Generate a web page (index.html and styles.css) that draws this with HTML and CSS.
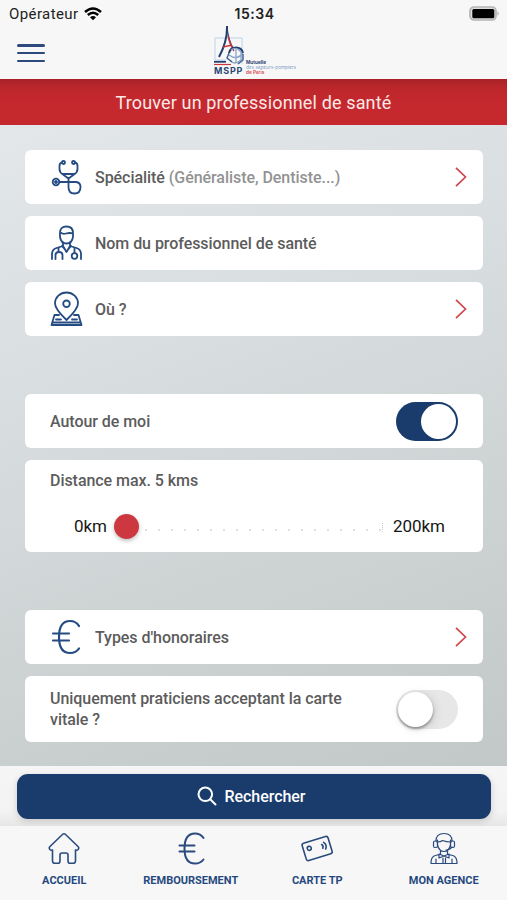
FILE: index.html
```html
<!doctype html>
<html lang="fr">
  <head>
    <meta charset="UTF-8" />
    <meta name="viewport" content="width=device-width, initial-scale=1.0" />
    <title>Trouver un professionnel de santé</title>
    <link rel="stylesheet" href="styles.css" />
  </head>

  <body>
    <div class="status-bar">
      <div class="operator">
        <span>Opérateur</span>
        <svg width="18" height="14" viewBox="0 0 18 14" fill="none" stroke="#000" stroke-width="2.5">
          <path d="M1 5Q9-2 17 5M3.8 8Q9 3.4 14.2 8" />
          <path d="M6 10.3Q9 7.8 12 10.3L9 13.3Z" fill="#000" stroke="none" />
        </svg>
      </div>
      <span class="time">15:34</span>
      <svg class="battery" width="31" height="16" viewBox="0 0 31 16">
        <rect x="1" y="1" width="26" height="13" rx="4" fill="#ddd" stroke="#b5b5b5" stroke-width="1.7" />
        <rect x="3.3" y="3" width="22" height="9.3" rx="1.5" />
        <path d="M28.5 5.2Q31 7.5 28.5 9.8Z" fill="#aaa" />
      </svg>
    </div>

    <header>
      <button class="menu" aria-label="Menu"><span></span><span></span><span></span></button>
      <div class="logo">
        <svg width="31" height="40" viewBox="0 0 31 40" fill="none">
          <path d="M1 12H28V38M1 12V34H12" stroke="#b9d5ee" stroke-width="1" />
          <path d="M13 0Q13.5 15 5 31" stroke="#243f6b" stroke-width="2" />
          <path d="M13 2Q14.5 14 19 22" stroke="#243f6b" stroke-width="1.3" />
          <path d="M14 10Q16 19 20 25M9 21L18 19" stroke="#c9373d" stroke-width="1.4" />
          <path d="M15 27A7.2 7.2 0 0 1 29 27" stroke="#203d6c" stroke-width="2" />
          <path d="M17 24Q22 20 27 26V34Q20 40 16 34M15 29Q23 35 29 27M22 23V37" stroke="#8aa5c8" stroke-width="1.3" />
          <path d="M15 27L13 32L18 36M29 28V34L24 38" stroke="#395d8f" stroke-width="1.4" />
          <path d="M0 35.8H12" stroke="#243f6b" stroke-width="1.8" />
          <path d="M0 38.5H17" stroke="#c9373d" stroke-width="1.2" />
        </svg>
        <div class="logo-text">
          <b>MSPP</b>
          <p><strong>Mutuelle</strong><span>des sapeurs-pompiers</span><em>de Paris</em></p>
        </div>
      </div>
    </header>

    <h1>Trouver un professionnel de santé</h1>

    <main>
      <section>
        <div class="card">
          <svg class="icon" width="36" height="36" viewBox="0 0 36 36">
            <circle cx="13.5" cy="3.500" r="1.500" />
            <circle cx="23.500" cy="3.500" r="1.500" />
            <path d="M12 3.500Q9.500 4 9.500 7V10Q9.500 13.500 13 15.500L18.500 19.500L24 15.500Q27.500 13.500 27.500 10V7Q27.500 4 25 3.500M12.500 15H24.500" />
            <circle cx="6" cy="23" r="3.300" />
            <circle cx="6" cy="23" r="1" />
            <path d="M9.300 23H26Q30.500 23.500 30.500 28Q30.500 34.500 24.500 34.500Q18.500 34.500 18.500 28V20" />
          </svg>
          <p>Spécialité <span>(Généraliste, Dentiste...)</span></p>
          <svg class="chevron" width="12" height="20" viewBox="0 0 12 20"><path d="M1 .8L10.5 10L1 19.2" /></svg>
        </div>
        <div class="card">
          <svg class="icon" width="36" height="36" viewBox="0 0 36 36">
            <path d="M10 8Q10 1.500 16.500 1.500T23 8V12Q22 18.500 16.500 18.500T10 12ZM10 7Q12 9.500 16 8.500Q20 7.500 23 8.500" />
            <path d="M13 17.500V21L6.500 23Q2 24.500 2 29V34M20 17.500V21L26.500 23Q31 24.500 31 29V34M13 21L16.500 27L20 21M12 21L14.500 24M21 21L18.500 24" />
            <path d="M8.500 23V27M5.500 34V30Q5.500 27 9 27T12.500 30V34M24.500 23V28" />
            <circle cx="24.500" cy="31" r="2.800" />
          </svg>
          <p>Nom du professionnel de santé</p>
        </div>
        <div class="card">
          <svg class="icon" width="36" height="36" viewBox="0 0 36 36">
            <path d="M16.5 29Q5 18 5 12.5A11.5 11 0 0 1 28 12.5Q28 18 16.5 29Z" />
            <circle cx="16.5" cy="12.8" r="3.3" />
            <path d="M9 24H4.500L1.500 34H31.500L28.500 24H24M2.500 31.500H30.500M6 28.500H11M22 28.500H27" />
          </svg>
          <p>Où ?</p>
          <svg class="chevron" width="12" height="20" viewBox="0 0 12 20"><path d="M1 .8L10.5 10L1 19.2" /></svg>
        </div>
      </section>

      <section>
        <div class="card">
          <p>Autour de moi</p>
          <span class="toggle on"></span>
        </div>
        <div class="card distance">
          <p>Distance max. 5 kms</p>
          <div class="range">
            <span>0km</span>
            <span class="knob"></span>
            <span class="track"></span>
            <span>200km</span>
          </div>
        </div>
      </section>

      <section>
        <div class="card">
          <svg class="icon euro" width="36" height="36" viewBox="0 0 36 36">
            <path d="M29 7Q26 2 20 2Q9 2 9 18T20 34Q26 34 29 29.500M3 14.500H19M3 21.500H19" />
          </svg>
          <p>Types d'honoraires</p>
          <svg class="chevron" width="12" height="20" viewBox="0 0 12 20"><path d="M1 .8L10.5 10L1 19.2" /></svg>
        </div>
        <div class="card tall">
          <p>Uniquement praticiens acceptant la carte vitale ?</p>
          <span class="toggle"></span>
        </div>
      </section>
    </main>

    <div class="action">
      <button class="search">
        <svg width="20" height="20" viewBox="0 0 20 20" fill="none" stroke="#fff" stroke-width="2">
          <circle cx="8.3" cy="8.3" r="6.8" />
          <path d="M13.2 13.2L18.5 18.5" stroke-linecap="round" />
        </svg>
        Rechercher
      </button>
    </div>

    <nav>
      <a>
        <svg width="32" height="34" viewBox="0 0 32 34">
          <path d="M14.7 2.2Q16 1.2 17.3 2.2L30 14.5Q31.5 16 30 17.7Q28.8 18.5 27.5 18V29Q27.5 31.3 25 31.3H22Q20 31.3 20 29V23Q20 21 18 21H14Q12 21 12 23V29Q12 31.3 10 31.3H7Q4.5 31.3 4.5 29V18Q3.2 18.5 2 17.7Q.5 16 2 14.5Z" />
        </svg>
        Accueil
      </a>
      <a>
        <svg class="euro" width="32" height="34" viewBox="0 0 32 34">
          <path d="M28.5 6Q25.5 1.5 20 1.500Q9.500 1.500 9.500 16.500T20 31.500Q25.500 31.500 28.500 27.500M4.500 13.500H19.500M4.500 19.500H19.500" />
        </svg>
        Remboursement
      </a>
      <a>
        <svg width="32" height="34" viewBox="0 0 32 34">
          <g transform="rotate(-17 16 16)">
            <rect x="2.5" y="7.5" width="27" height="18" rx="2" />
            <circle cx="8.5" cy="14" r="2" />
            <path d="M21.5 14Q23 16 21.5 18M24 12.5Q26.8 16 24 19.5" />
          </g>
        </svg>
        Carte TP
      </a>
      <a>
        <svg class="agent" width="32" height="34" viewBox="0 0 32 34">
          <path d="M8 9Q8 1.5 16 1.5T24 9M9 10Q13 10 14.5 8.500Q18 10 23 10M9.500 8V13Q11 19.500 16 19.500T22.500 13V8" />
          <rect x="5.500" y="9" width="4" height="6.500" rx="1.500" />
          <rect x="22.500" y="9" width="4" height="6.500" rx="1.500" />
          <path d="M24 15Q22 18 18 18M12.500 19V22L6 24Q3 25.500 3 31.500H29Q29 25.500 26 24L19.500 22V19M11 22L16 24L21 22V26L16 24L11 26ZM15 26V31M17.500 26V31M8 27V31M24 27V31" />
        </svg>
        Mon agence
      </a>
    </nav>
  </body>
</html>
```

FILE: styles.css
```css
* {
  box-sizing: border-box;
}

body {
  margin: 0;
  height: 900px;
  display: flex;
  flex-direction: column;
  overflow: hidden;
  background: #f7f7f7;
  color: #5c5c5c;
  font-family: Roboto, sans-serif;
  font-size: 16px;
}

p {
  margin: 0;
}

button {
  padding: 0;
  border: 0;
  background: none;
  font: inherit;
}

.status-bar {
  height: 27px;
  padding: 0 7px 0 9px;
  display: grid;
  grid-template-columns: 1fr auto 1fr;
  align-items: center;
  color: #222;
}

.operator {
  display: flex;
  align-items: center;
  gap: 6px;
  font-size: 15px;
  letter-spacing: 0.4px;
}

.time {
  font: 600 14px Inter, sans-serif;
  letter-spacing: 0.5px;
}

.battery {
  justify-self: end;
}

header {
  height: 52px;
  display: flex;
}

.menu {
  width: 28px;
  height: 18px;
  margin: 17px 0 0 17px;
  display: flex;
  flex-direction: column;
  justify-content: space-between;

  & span {
    height: 2.5px;
    border-radius: 2px;
    background: #2c4a7b;
  }
}

.logo {
  margin-left: 169px;
  width: 90px;

  & > svg {
    display: block;
    margin-top: -1px;
  }
}

.logo-text {
  display: flex;
  gap: 3px;

  & b {
    width: 29px;
    font: 700 9px/10px Inter, sans-serif;
    letter-spacing: 0.8px;
    color: #2b4775;
  }

  & p {
    margin-top: -6px;
    font: 4.7px/5px Inter, sans-serif;
    white-space: nowrap;
  }

  & strong,
  & span,
  & em {
    display: block;
    font-style: normal;
  }

  & strong {
    color: #2b4775;
  }

  & span {
    color: #7f9fc7;
  }

  & em {
    color: #d9444b;
    font-weight: 600;
  }
}

h1 {
  height: 46px;
  margin: 0;
  background: linear-gradient(#a92127, #bd272c 10px, #c5282e 24px, #c4282d);
  color: #fbe9e6;
  font-size: 18px;
  font-weight: 400;
  line-height: 47px;
  letter-spacing: 0.14px;
  text-align: center;
}

main {
  height: 641px;
  padding: 25px 24.5px 0 25px;
  display: flex;
  flex-direction: column;
  gap: 58px;
  background: linear-gradient(160deg, #e3e7ea, #d8dddf 35%, #ccd2d2 70%, #c2c8c8);
}

section {
  display: flex;
  flex-direction: column;
  gap: 12px;
}

.card {
  height: 54px;
  padding: 0 25px;
  display: flex;
  align-items: center;
  border-radius: 6px;
  background: #fff;
  font-weight: 500;
  line-height: 21px;
  letter-spacing: -0.05px;

  & p span {
    color: #929292;
  }
}

.icon {
  margin-right: 9px;
  fill: none;
  stroke: #244b82;
  stroke-width: 1.8;
  stroke-linecap: round;
  stroke-linejoin: round;
}

.euro {
  stroke-width: 2.2;
}

.chevron {
  margin: 0 -9px 0 auto;
  fill: none;
  stroke: #cf464c;
  stroke-width: 1.7;
}

.toggle {
  flex: none;
  width: 62px;
  height: 39px;
  margin-left: auto;
  padding: 2px;
  display: flex;
  border-radius: 20px;
  background: #e7e7e7;

  &::before {
    content: "";
    width: 35px;
    height: 35px;
    border-radius: 50%;
    background: #fff;
    box-shadow: 0 2px 3px rgb(0 0 0 / 35%), 2px 2px 10px rgb(0 0 0 / 12%);
  }

  &.on {
    justify-content: flex-end;
    background: #193c6c;
  }

  &.on::before {
    box-shadow: none;
  }
}

.distance {
  height: 92px;
  padding-top: 10px;
  flex-direction: column;
  align-items: stretch;
}

.range {
  margin-top: 22px;
  padding-left: 24px;
  display: flex;
  align-items: center;
  height: 26px;
  color: #161616;
  font-size: 17px;
  font-weight: 400;
}

.knob {
  flex: none;
  width: 25px;
  height: 25px;
  margin-left: 7px;
  border-radius: 50%;
  background: #cd3840;
  box-shadow: 0 2px 4px rgb(0 0 0 / 25%);
}

.track {
  width: 240px;
  height: 9px;
  margin: 2px 10px 0 4px;
  background: radial-gradient(circle at 3px 7px, #dedede 0.7px, transparent 1.2px) 0 0 / 13px 9px;
  border-right: 1px dotted #c8c8c8;
}

.tall {
  height: 66px;

  & p {
    width: 310px;
  }
}

.action {
  height: 60px;
  padding: 8px 16px 0 17px;
  background: linear-gradient(#f6f6f6, #f3f3f3 45px, #e6e6e6);
}

.search {
  width: 100%;
  height: 44.5px;
  padding-right: 6px;
  display: flex;
  align-items: center;
  justify-content: center;
  gap: 8px;
  border-radius: 11px;
  background: #193c6c;
  box-shadow: 0 2px 7px rgb(0 0 0 / 16%);
  color: #fff;
  font-weight: 500;
  letter-spacing: -0.05px;
}

nav {
  height: 74px;
  padding: 6px 0 0 1px;
  display: grid;
  grid-template-columns: repeat(4, 1fr);

  & a {
    display: flex;
    flex-direction: column;
    align-items: center;
    gap: 8px;
    color: #25497e;
    font-size: 11px;
    font-weight: 700;
    line-height: 13px;
    text-transform: uppercase;
  }

  & svg {
    fill: none;
    stroke: #294b7d;
    stroke-width: 1.6;
    stroke-linecap: round;
    stroke-linejoin: round;
  }

  & .euro {
    stroke-width: 2;
  }

  & .agent {
    stroke-width: 1.2;
  }
}
```
